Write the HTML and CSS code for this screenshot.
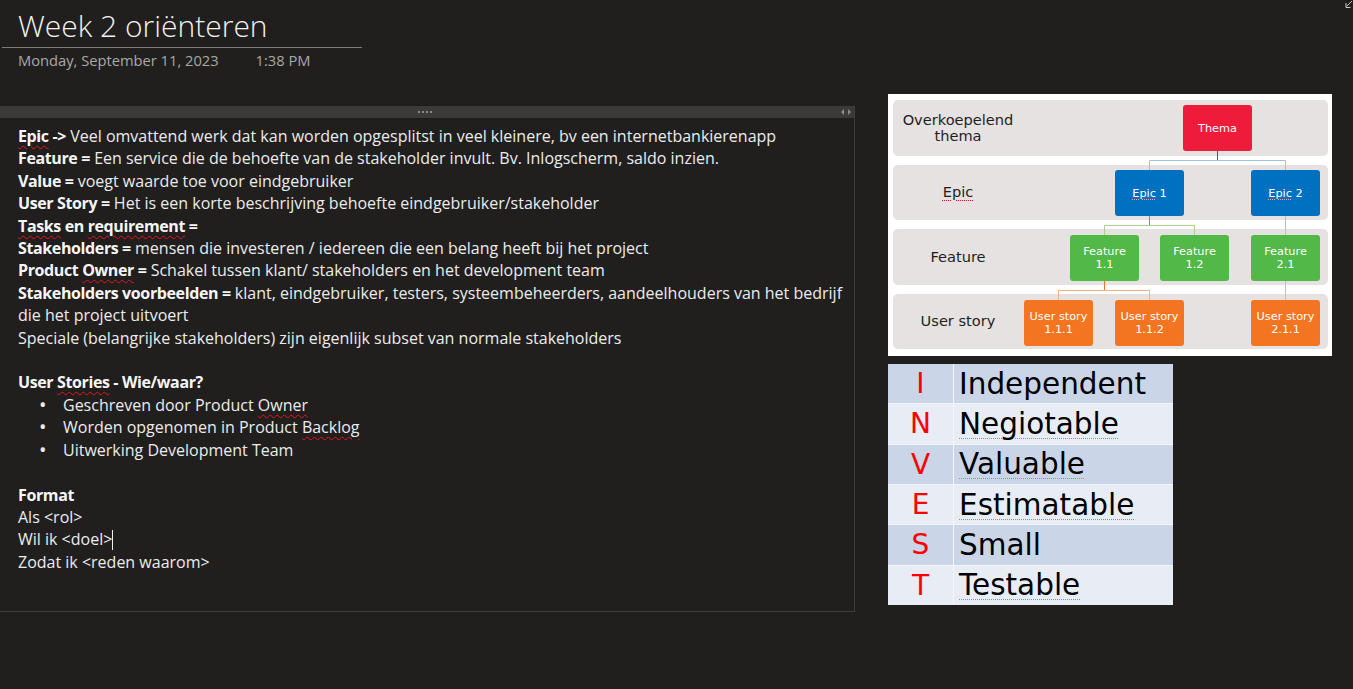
FILE: index.html
```html
<!DOCTYPE html>
<html>
<head>
<meta charset="utf-8">
<link rel="stylesheet" href="styles.css">
</head>
<body>
<div class="page">
  <header class="head">
    <div class="title-wrap"><h1 class="title">Week 2 oriënteren</h1></div>
    <div class="meta"><span class="date">Monday, September 11, 2023</span><span class="time">1:38 PM</span></div>
  </header>
  <main class="canvas">
    <section class="note">
      <div class="note-bar"><span class="grip"></span><svg class="arrows" width="12" height="8" viewBox="0 0 12 8"><path d="M4 1 L1 4 L4 7 Z M8 1 L11 4 L8 7 Z" fill="#8a8a8a"/></svg></div>
      <div class="note-body">
        <p><b><span class="sq">Epic</span> -&gt;</b> Veel omvattend werk dat kan worden opgesplitst in veel kleinere, bv een internetbankierenapp</p>
        <p><b>Feature =</b> Een service die de behoefte van de stakeholder invult. Bv. Inlogscherm, saldo inzien.</p>
        <p><b>Value =</b> voegt waarde toe voor eindgebruiker</p>
        <p><b>User Story =</b> Het is een korte beschrijving behoefte eindgebruiker/stakeholder</p>
        <p><b><span class="sq">Tasks</span> en <span class="sq">requirement</span> =</b></p>
        <p><b>Stakeholders =</b> mensen die investeren / iedereen die een belang heeft bij het project</p>
        <p><b>Product <span class="sq">Owner</span> =</b> Schakel tussen klant/ stakeholders en het development team</p>
        <p><b>Stakeholders voorbeelden =</b> klant, eindgebruiker, testers, systeembeheerders, aandeelhouders van het bedrijf</p>
        <p>die het project uitvoert</p>
        <p>Speciale (belangrijke stakeholders) zijn eigenlijk subset van normale stakeholders</p>
        <p>&nbsp;</p>
        <p><b>User <span class="sq">Stories</span> - Wie/waar?</b></p>
        <ul class="bullets">
          <li>Geschreven door Product <span class="sq">Owner</span></li>
          <li>Worden opgenomen in Product <span class="sq">Backlog</span></li>
          <li>Uitwerking Development Team</li>
        </ul>
        <p>&nbsp;</p>
        <p><b>Format</b></p>
        <p>Als &lt;rol&gt;</p>
        <p>Wil ik &lt;doel&gt;<span class="caret"></span></p>
        <p>Zodat ik &lt;reden waarom&gt;</p>
      </div>
    </section>
    <aside class="side">
      <div class="diagram">
        <div class="row row-1"><span class="lbl">Overkoepelend<br>thema</span></div>
        <div class="row row-2"><span class="lbl"><span class="sq2">Epic</span></span></div>
        <div class="row row-3"><span class="lbl">Feature</span></div>
        <div class="row row-4"><span class="lbl">User story</span></div>
        <svg class="links" width="444" height="262" viewBox="0 0 444 262">
          <g fill="none" stroke-width="1">
            <path d="M329.5 57 V66.5" stroke="#0070c0"/>
            <path d="M261.5 76 V66.5 H397.5 V76" stroke="#9dc3e6"/>
            <path d="M261.5 122 V131.5" stroke="#50b848"/>
            <path d="M216.5 141 V131.5 H306.5 V141" stroke="#a9d18e"/>
            <path d="M397.5 122 V141" stroke="#a9d18e"/>
            <path d="M216.5 187 V196.5" stroke="#f47521"/>
            <path d="M170.5 206 V196.5 H261.5 V206" stroke="#f4b183"/>
            <path d="M397.5 187 V206" stroke="#f4b183"/>
          </g>
        </svg>
        <div class="box red" style="left:295px;top:11px">Thema</div>
        <div class="box blue" style="left:227px;top:76px"><span class="sq3">Epic</span>&nbsp;1</div>
        <div class="box blue" style="left:363px;top:76px"><span class="sq3">Epic</span>&nbsp;2</div>
        <div class="box green" style="left:182px;top:141px">Feature<br>1.1</div>
        <div class="box green" style="left:272px;top:141px">Feature<br>1.2</div>
        <div class="box green" style="left:363px;top:141px">Feature<br>2.1</div>
        <div class="box orange" style="left:136px;top:206px">User story<br>1.1.1</div>
        <div class="box orange" style="left:227px;top:206px">User story<br>1.1.2</div>
        <div class="box orange" style="left:363px;top:206px">User story<br>2.1.1</div>
      </div>
      <div class="invest">
        <div class="l dark">I</div><div class="w dark">Independent</div>
        <div class="l light">N</div><div class="w light"><span class="sq4">Negiotable</span></div>
        <div class="l dark">V</div><div class="w dark"><span class="sq4">Valuable</span></div>
        <div class="l light">E</div><div class="w light"><span class="sq4">Estimatable</span></div>
        <div class="l dark">S</div><div class="w dark">Small</div>
        <div class="l light">T</div><div class="w light"><span class="sq4">Testable</span></div>
      </div>
    </aside>
  </main>
  <svg class="corner" width="8" height="9" viewBox="0 0 8 9"><path d="M7 1 L1.5 6.5 M1 3 V7.5 H5.5" fill="none" stroke="#c8c8c8" stroke-width="1"/></svg>
</div>
</body>
</html>
```
FILE: styles.css
```css
html, body {
  margin: 0;
  padding: 0;
  background: #201f1e;
}
.page {
  position: relative;
  width: 1353px;
  height: 689px;
  overflow: hidden;
  font-family: "Open Sans", "Noto Sans", sans-serif;
  color: #ececec;
}
.head {
  padding-left: 2px;
}
.title-wrap {
  width: 360px;
  border-bottom: 1px solid #7d7c7b;
  padding-top: 5px;
}
.title {
  margin: 0;
  padding-left: 16px;
  font-weight: 300;
  font-size: 30px;
  line-height: 42px;
  color: #f2f2f2;
}
.meta {
  padding-left: 16px;
  height: 24px;
  line-height: 24px;
  font-size: 14.7px;
  color: #a8a8a8;
}
.time {
  margin-left: 37px;
}
.canvas {
  display: flex;
  align-items: flex-start;
  margin-top: 22px;
}
.note {
  margin-top: 12px;
  width: 854px;
  border-right: 1px solid #3e3d3c;
  border-bottom: 1px solid #3e3d3c;
}
.note-bar {
  position: relative;
  height: 12px;
  background: #3b3a39;
}
.grip {
  position: absolute;
  left: 418px;
  top: 5px;
  width: 15px;
  height: 2px;
  background: repeating-linear-gradient(90deg, #8a8a8a 0 2px, transparent 2px 4px);
}
.arrows {
  position: absolute;
  right: 2px;
  top: 2px;
}
.note-body {
  padding: 7px 0 38px 18px;
  font-size: 16px;
  line-height: 22.4px;
}
.note-body p {
  margin: 0;
}
.note-body b {
  font-weight: 700;
  color: #f6f6f6;
  letter-spacing: -0.38px;
}
.sq {
  text-decoration: underline wavy #e81123;
  text-decoration-thickness: 1px;
  text-underline-offset: 3px;
}
.bullets {
  list-style: none;
  margin: 0;
  padding: 0 0 0 45px;
}
.bullets li::before {
  content: "•";
  display: inline-block;
  width: 24px;
  margin-left: -24px;
  font-size: 20px;
  vertical-align: -1px;
}
.caret {
  display: inline-block;
  width: 1px;
  height: 20px;
  background: #f0f0f0;
  vertical-align: -5px;
}
.side {
  margin-left: 33px;
  display: flex;
  flex-direction: column;
  gap: 8px;
}
.diagram {
  position: relative;
  width: 444px;
  height: 262px;
  box-sizing: border-box;
  background: #ffffff;
  padding: 6px 4px 6px 5px;
  display: flex;
  flex-direction: column;
  gap: 9px;
  font-family: "DejaVu Sans", Verdana, sans-serif;
}
.row {
  height: 55.5px;
  background: #e5e2e1;
  border-radius: 5px;
  display: flex;
  align-items: center;
}
.lbl {
  width: 130px;
  text-align: center;
  font-size: 14.6px;
  line-height: 16px;
  color: #1e1e1e;
}
.sq2 {
  text-decoration: underline dotted #e81123;
  text-decoration-thickness: 1px;
  text-underline-offset: 3px;
}
.links {
  position: absolute;
  left: 0;
  top: 0;
}
.box {
  position: absolute;
  width: 69px;
  height: 46px;
  border-radius: 3px;
  color: #ffffff;
  font-size: 11.3px;
  line-height: 13px;
  display: flex;
  align-items: center;
  justify-content: center;
  text-align: center;
}
.red { background: #ee1b3b; }
.blue { background: #0071c1; }
.green { background: #52b848; }
.orange { background: #f47521; }
.sq3 {
  text-decoration: underline dotted #ff9aa8;
  text-decoration-thickness: 1px;
  text-underline-offset: 2px;
}
.invest {
  width: 285px;
  display: grid;
  grid-template-columns: 65px 1fr;
  grid-template-rows: repeat(6, 39.33px);
  gap: 1px;
  background: #f4f6fa;
  font-family: "DejaVu Sans", Verdana, sans-serif;
}
.l, .w {
  display: flex;
  align-items: center;
}
.l {
  justify-content: center;
  color: #ff0000;
  font-size: 28px;
}
.w {
  padding-left: 5px;
  color: #000000;
  font-size: 29.5px;
}
.dark { background: #cad5e8; }
.light { background: #e8ecf4; }
.sq4 {
  text-decoration: underline dotted #e86a7a;
  text-decoration-thickness: 1px;
  text-underline-offset: 4px;
}
.corner {
  position: absolute;
  right: 0;
  top: 0;
}
```
